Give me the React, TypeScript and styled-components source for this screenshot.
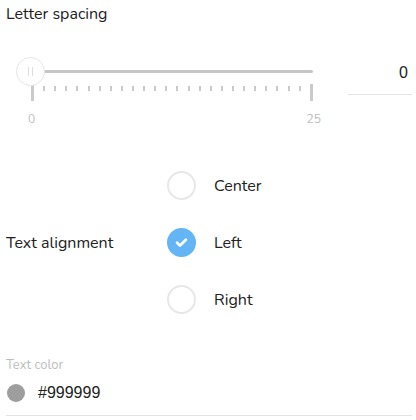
import styled, { createGlobalStyle } from 'styled-components'

const GlobalStyle = createGlobalStyle`
  body {
    margin: 0;
    background: #ffffff;
    font-family: 'Nunito', Lato, 'Noto Sans', sans-serif;
    color: #212121;
  }
`

const Page = styled.div`
  width: 416px;
  height: 420px;
  box-sizing: border-box;
  padding: 4px 4px 0 6px;
  overflow: hidden;
`

const Heading = styled.div`
  font-size: 16px;
  line-height: 20px;
  height: 20px;
`

const SliderRow = styled.div`
  display: flex;
  align-items: flex-start;
  margin-top: 33px;
`

const SliderBox = styled.div`
  position: relative;
  margin-left: 25px;
  width: 282px;
  padding-top: 13px;
`

const Track = styled.div`
  height: 3px;
  background: #c6c6c6;
  border-radius: 2px;
`

const Thumb = styled.div`
  position: absolute;
  left: -15px;
  top: 0;
  width: 27px;
  height: 27px;
  border: 1px solid #e6e6e6;
  border-radius: 50%;
  background: #ffffff;
  display: flex;
  align-items: center;
  justify-content: center;
  gap: 3px;
`

const Grip = styled.span`
  width: 1px;
  height: 9px;
  background: #dddddd;
`

const Ticks = styled.div`
  display: flex;
  justify-content: space-between;
  align-items: flex-start;
  margin-top: 13px;
`

const Tick = styled.span<{ major?: boolean }>`
  width: ${({ major }) => (major ? 3 : 2)}px;
  height: ${({ major }) => (major ? 17 : 5)}px;
  margin-top: ${({ major }) => (major ? -2 : 0)}px;
  background: #cacaca;
`

const Scale = styled.div`
  display: flex;
  justify-content: space-between;
  margin: 11px -8px 0 -3px;
  font-size: 12px;
  line-height: 14px;
  color: #bdbdbd;
`

const NumberInput = styled.div`
  margin-left: auto;
  margin-top: 3px;
  width: 64px;
  height: 35px;
  box-sizing: border-box;
  border-bottom: 1px solid #e4e4e4;
  text-align: right;
  padding-right: 4px;
  font-family: 'Liberation Sans', Arial, sans-serif;
  font-size: 16px;
  line-height: 26px;
  color: #212121;
`

const AlignSection = styled.div`
  display: flex;
  align-items: center;
  margin-top: 31px;
`

const AlignLabel = styled.div`
  width: 161px;
  font-size: 16px;
`

const Options = styled.div`
  display: flex;
  flex-direction: column;
`

const Option = styled.label`
  display: flex;
  align-items: center;
  height: 57px;
  gap: 18px;
  font-size: 16px;
  cursor: pointer;
`

const Radio = styled.span<{ checked?: boolean }>`
  width: 29px;
  height: 29px;
  box-sizing: border-box;
  border-radius: 50%;
  border: 2px solid ${({ checked }) => (checked ? '#64b5f6' : '#e8e8e8')};
  background: ${({ checked }) => (checked ? '#64b5f6' : '#ffffff')};
  display: flex;
  align-items: center;
  justify-content: center;
`

const ColorLabel = styled.div`
  margin-top: 29px;
  font-size: 13px;
  line-height: 16px;
  color: #bdbdbd;
`

const ColorField = styled.div`
  display: flex;
  align-items: center;
  gap: 13px;
  height: 43px;
  padding-left: 1px;
  border-bottom: 1px solid #e4e4e4;
  padding-bottom: 2px;
  box-sizing: border-box;
`

const Swatch = styled.span<{ color: string }>`
  width: 18px;
  height: 18px;
  border-radius: 50%;
  background: ${({ color }) => color};
`

const ColorValue = styled.span`
  font-family: 'Liberation Sans', Arial, sans-serif;
  font-size: 16px;
  color: #212121;
`

const alignments = [
  { label: 'Center', checked: false },
  { label: 'Left', checked: true },
  { label: 'Right', checked: false },
]

export default function App() {
  const ticks = Array.from({ length: 26 }, (_, i) => i)

  return (
    <>
      <GlobalStyle />
      <Page>
        <Heading>Letter spacing</Heading>
        <SliderRow>
          <SliderBox>
            <Track />
            <Thumb>
              <Grip />
              <Grip />
            </Thumb>
            <Ticks>
              {ticks.map((i) => (
                <Tick key={i} major={i === 0 || i === 25} />
              ))}
            </Ticks>
            <Scale>
              <span>0</span>
              <span>25</span>
            </Scale>
          </SliderBox>
          <NumberInput>0</NumberInput>
        </SliderRow>

        <AlignSection>
          <AlignLabel>Text alignment</AlignLabel>
          <Options>
            {alignments.map((a) => (
              <Option key={a.label}>
                <Radio checked={a.checked}>
                  {a.checked && (
                    <svg width="15" height="15" viewBox="0 0 24 24">
                      <path
                        d="M5 12.5l4.5 4.5L19 7.5"
                        fill="none"
                        stroke="#ffffff"
                        strokeWidth="4.5"
                        strokeLinecap="round"
                        strokeLinejoin="round"
                      />
                    </svg>
                  )}
                </Radio>
                {a.label}
              </Option>
            ))}
          </Options>
        </AlignSection>

        <ColorLabel>Text color</ColorLabel>
        <ColorField>
          <Swatch color="#9e9e9e" />
          <ColorValue>#999999</ColorValue>
        </ColorField>
      </Page>
    </>
  )
}
